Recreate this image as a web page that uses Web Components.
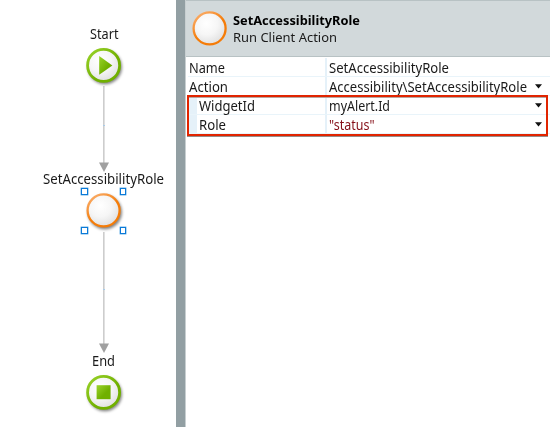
<!DOCTYPE html>
<html lang="en">
<head>
<meta charset="utf-8">
<title>SetAccessibilityRole</title>
<style>
html, body { margin: 0; width: 550px; height: 427px; overflow: hidden; background: #fff; }
body { font: 13.6px/19px "Noto Sans", "Open Sans", sans-serif; color: #1a1a1a; }
</style>
</head>
<body>
<action-editor></action-editor>
<script>
const define = (name, html, init) => customElements.define(name, class extends HTMLElement {
  connectedCallback() {
    if (this.shadowRoot) return;
    this.attachShadow({ mode: 'open' }).innerHTML = html;
    if (init) init(this, this.shadowRoot);
  }
});

/* One line of text condensed to a given width. */
define('fit-text', `<style>
  :host { display: block; white-space: pre; }
  span { display: inline-block; transform-origin: 0 50%; }
</style><span><slot></slot></span>`, (el, root) => {
  const width = Number(el.getAttribute('width'));
  const span = root.querySelector('span');
  el.style.width = width + 'px';
  span.style.transform = `scaleX(${(width / span.getBoundingClientRect().width).toFixed(4)})`;
});

/* Round node icon: start, end or action. */
define('node-icon', `<style>
  :host { display: block; width: 44px; height: 44px; }
  svg { display: block; }
  .glyph { display: none; }
  :host([kind=start]) .start, :host([kind=end]) .end { display: block; }
  :host([kind=action]) .ring { stroke: url(#orange); stroke-width: 2.3; }
  :host([flat]) .shade { display: none; }
</style>
<svg width="44" height="44" viewBox="0 0 44 44">
  <defs>
    <linearGradient id="green" x1="0" y1="0" x2="1" y2="1"><stop offset="0" stop-color="#9ad42a"/><stop offset=".6" stop-color="#70b000"/><stop offset="1" stop-color="#70b000"/></linearGradient>
    <linearGradient id="orange" x1="0" y1="0" x2=".7" y2="1"><stop offset="0" stop-color="#fbb478"/><stop offset=".6" stop-color="#f57c08"/><stop offset="1" stop-color="#f57c08"/></linearGradient>
    <radialGradient id="face" cx=".4" cy=".35" r=".7"><stop offset="0" stop-color="#fff"/><stop offset=".5" stop-color="#f6f6f6"/><stop offset="1" stop-color="#dedede"/></radialGradient>
    <filter id="soft" x="-30%" y="-30%" width="160%" height="160%"><feGaussianBlur stdDeviation="1.5"/></filter>
  </defs>
  <circle class="shade" cx="22.9" cy="23.2" r="17" fill="#000" opacity=".5" filter="url(#soft)"/>
  <circle class="ring" cx="21.6" cy="21.4" r="16" fill="url(#face)" stroke="url(#green)" stroke-width="2.8"/>
  <path class="glyph start" d="M17.2 12.1 L30.4 21.4 L17.2 30.8Z" fill="url(#green)"/>
  <rect class="glyph end" x="14.6" y="14.2" width="14" height="14" fill="url(#green)"/>
</svg>`);

define('flow-link', `<style>
  :host { display: block; width: 10px; }
  svg { display: block; width: 10px; height: 100%; }
</style><svg></svg>`, (el, root) => {
  const h = Number(el.getAttribute('length'));
  root.querySelector('svg').innerHTML =
    `<rect x="4" y="0" width="1" height="${h - 9}" fill="#cdcdcd"/><rect x="5" y="0" width="1" height="${h - 9}" fill="#e0e0e0"/>
     <rect x="4" y="${el.getAttribute('mark')}" width="2" height="1" fill="#a9cbe8"/>
     <path d="M0 ${h - 9.5}H10L5 ${h}Z" fill="#a0a0a0"/>`;
});

define('selection-handles', `<style>
  :host { display: grid; width: 45px; height: 46px; grid-template-columns: 7px 6px; justify-content: space-between; align-content: space-between; }
  i { box-sizing: border-box; height: 7px; background: #fff; border: 1px solid #0b7ad8; box-shadow: 0 0 0 .4px #4aa0e2; }
</style><i></i><i></i><i></i><i></i>`);

define('flow-canvas', `<style>
  :host { display: block; position: relative; width: 176px; height: 427px; }
  :host > * { position: absolute; }
</style>
<flow-link length="86" mark="39" style="left:99px;top:86px;height:86px"></flow-link>
<flow-link length="121" mark="57" style="left:99px;top:232px;height:121px"></flow-link>
<fit-text width="28.5" style="left:89.5px;top:24px">Start</fit-text>
<node-icon kind="start" style="left:82px;top:44px"></node-icon>
<fit-text width="121" style="left:43px;top:169px">SetAccessibilityRole</fit-text>
<node-icon kind="action" style="left:82px;top:189px"></node-icon>
<selection-handles style="left:81px;top:188px"></selection-handles>
<fit-text width="23" style="left:92px;top:351px">End</fit-text>
<node-icon kind="end" style="left:82px;top:371px"></node-icon>`);

define('panel-header', `<style>
  :host { display: flex; box-sizing: border-box; height: 57px; background: #d2d9db; border: solid #b8c2c4; border-width: 1px 0; }
  node-icon { margin: 6px 0 0 2px; }
  div { display: flex; flex-direction: column; padding: 11px 0 0 1px; font-size: 13px; line-height: 17px; }
  .title { font-weight: 700; color: #000; }
</style>
<node-icon kind="action" flat></node-icon>
<div><fit-text class="title" width="127">SetAccessibilityRole</fit-text><fit-text width="104">Run Client Action</fit-text></div>`);

define('property-row', `<style>
  :host { display: grid; grid-template-columns: 139px 1fr; box-sizing: border-box; height: 19px; border-bottom: 1px solid #e9f4fa; }
  .key { box-sizing: border-box; height: 18px; border-right: 2px solid #e5f1f9; padding-left: 1px; line-height: 20px; }
  :host([nested]) .key { border-left: 9px solid #e5f1f9; padding-left: 2px; }
  .value { display: flex; justify-content: space-between; height: 18px; padding: 0 8px 0 2px; line-height: 20px; }
  svg { display: none; margin-top: 7px; }
  :host([menu]) svg { display: block; }
</style>
<div class="key"><slot name="key"></slot></div>
<div class="value"><slot></slot><svg width="7" height="5"><path d="M0 .2H7L3.5 4.4Z" fill="#111"/></svg></div>`);

define('property-panel', `<style>
  :host { display: block; position: relative; }
  .rows { padding: 1px 0 0 2px; }
  .expr { color: #850f18; }
  .focus { position: absolute; box-sizing: border-box; left: 1px; top: 95px; width: 361px; height: 41px; border: 2px solid #e12400; box-shadow: 0 1px 0 #968d8a, inset 0 1px 0 #b8a6a0; }
</style>
<panel-header></panel-header>
<div class="rows">
  <property-row><fit-text slot="key" width="36">Name</fit-text><fit-text width="120">SetAccessibilityRole</fit-text></property-row>
  <property-row menu><fit-text slot="key" width="39">Action</fit-text><fit-text width="198">Accessibility\\SetAccessibilityRole</fit-text></property-row>
  <property-row nested menu><fit-text slot="key" width="56">WidgetId</fit-text><fit-text width="61">myAlert.Id</fit-text></property-row>
  <property-row nested menu><fit-text slot="key" width="27">Role</fit-text><fit-text class="expr" width="45.5">"status"</fit-text></property-row>
</div>
<div class="focus"></div>`);

define('action-editor', `<style>
  :host { display: grid; grid-template-columns: 176px 9px 1px 1fr; height: 427px; }
  .bar { background: #929fa3; }
  .edge { background: #c8cfd1; }
</style>
<flow-canvas></flow-canvas><div class="bar"></div><div class="edge"></div><property-panel></property-panel>`);
</script>
</body>
</html>
